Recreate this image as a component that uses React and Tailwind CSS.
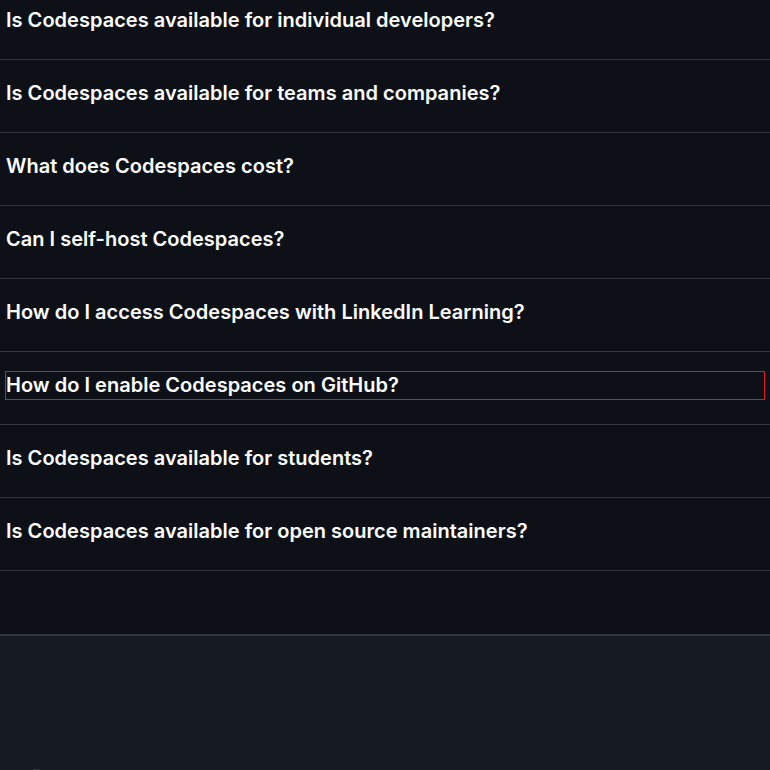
import React from 'react';

const questions = [
  'Is Codespaces available for individual developers?',
  'Is Codespaces available for teams and companies?',
  'What does Codespaces cost?',
  'Can I self-host Codespaces?',
  'How do I access Codespaces with LinkedIn Learning?',
  'How do I enable Codespaces on GitHub?',
  'Is Codespaces available for students?',
  'Is Codespaces available for open source maintainers?',
];

// FAQ accordion, scrolled slightly so the first row is cut at the top
export default function App() {
  return (
    <div
      className="w-[770px] h-[770px] overflow-hidden bg-[#0d1117] text-white"
      style={{ fontFamily: 'Inter, "Liberation Sans", sans-serif' }}
    >
      <div className="-mt-[13px]">
        {questions.map((q, i) => (
          <div key={i} className="border-b border-[#30363d] pt-[20px] pb-[25px] px-[6px]">
            <div
              className={`text-[20px] leading-[27px] font-semibold tracking-[0.02px] ${
                i === 5 ? 'outline outline-1 outline-[#e3161f]' : ''
              }`}
            >
              {q}
            </div>
          </div>
        ))}
      </div>
      <div className="h-[65px] border-b-2 border-[#30363d]" />
      <div className="h-[200px] bg-[#161b22] relative">
        <div className="absolute left-[33px] top-[133px] w-[7px] h-[2px] bg-[#30363d]" />
      </div>
    </div>
  );
}
